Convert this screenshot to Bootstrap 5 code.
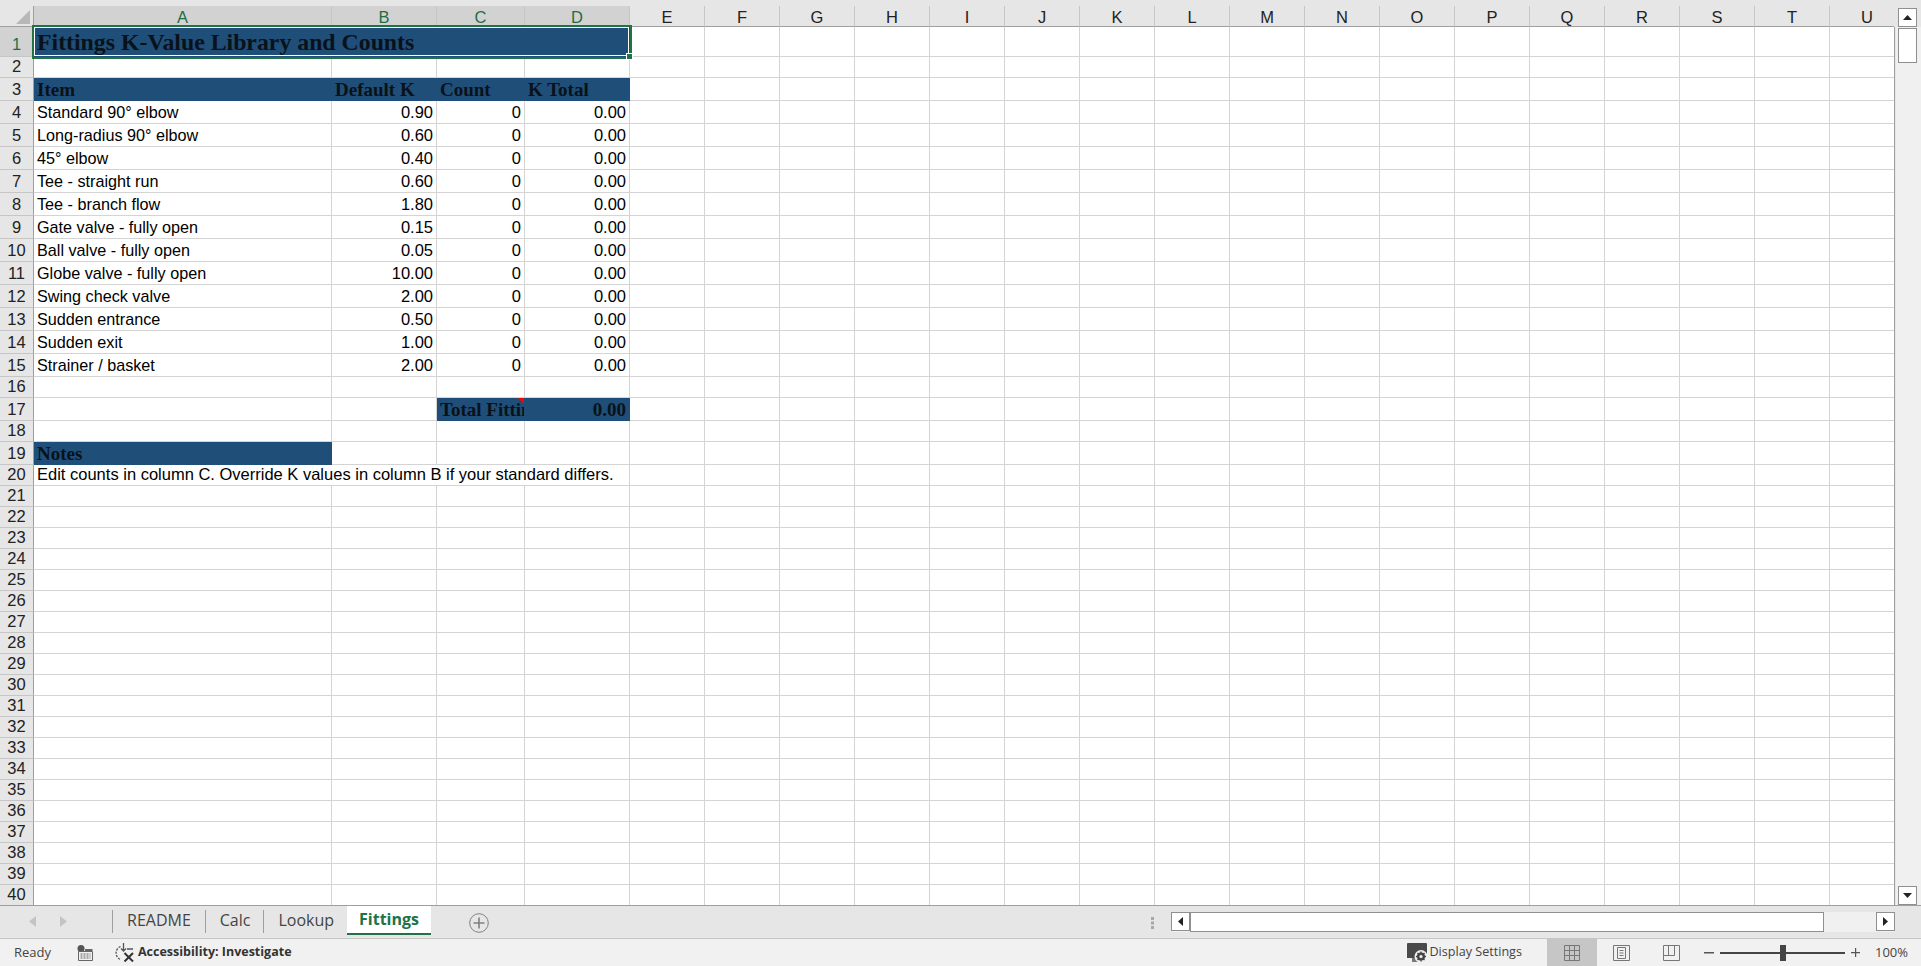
<!DOCTYPE html>
<html lang="en">
<head>
    <meta charset="UTF-8">
    <title>Fittings</title>
    <link href="https://cdn.jsdelivr.net/npm/bootstrap@5.3.2/dist/css/bootstrap.min.css" rel="stylesheet">
    <style>
        html, body { height: 100%; overflow: hidden; }
        body { background: #e6e6e6; font-family: "Liberation Sans", Arial, sans-serif; color: #000; }
        .xl-app { height: 966px; }
        .xl-sheetarea { height: 905px; padding-top: 6px; }
        .xl-gridclip { width: 1895px; height: 899px; overflow: hidden; background: #fff; }
        .xl-table { table-layout: fixed; width: 1905px; border-collapse: separate; border-spacing: 0; }
        .xl-table th, .xl-table td { padding: 0 3px; white-space: nowrap; overflow: hidden; border-right: 1px solid #d4d4d4; border-bottom: 1px solid #d4d4d4; font-size: 16.5px; line-height: 1; }
        .xl-table td { vertical-align: bottom; padding-bottom: 3px; }
        .xl-table td.xl-item { font-size: 16.2px; }
        .xl-table thead th { height: 21px; background: #e6e6e6; font-weight: 400; text-align: center; color: #222; border-right: 1px solid #c6c6c6; border-bottom: 1px solid #9f9f9f; padding: 2px 0 0; font-size: 16.5px; vertical-align: middle; }
        .xl-table thead th.xl-sel { background: #d2d2d2; color: #1f6e43; }
        .xl-table th.xl-rowhead { background: #e6e6e6; font-weight: 400; text-align: center; padding: 0 0 3px; border-right: 1px solid #9f9f9f; border-bottom: 1px solid #c6c6c6; vertical-align: bottom; color: #222; }
        .xl-table th.xl-rowhead.xl-sel { background: #d2d2d2; color: #1f6e43; padding-bottom: 4px; }
        .xl-table thead th.xl-corner { position: relative; border-right-color: #9f9f9f; }
        .xl-corner svg { position: absolute; right: 3px; bottom: 2px; }
        .xl-table td.xl-blue { background: #1f4e78; border-color: #1f4e78; font-family: "Liberation Serif", Cambria, serif; font-weight: 700; font-size: 19px; color: #0a1219; padding-bottom: 1px; }
        .xl-table td.xl-title { font-size: 23.8px; padding: 0 3px 1px; position: relative; overflow: visible; outline: 2px solid #217346; box-shadow: inset 0 0 0 1px #fff; }
        .xl-num { text-align: right; }
        .xl-note { position: relative; }
        .xl-note::after { content: ""; position: absolute; top: 0; right: 0; border-top: 6px solid #f00; border-left: 6px solid transparent; }
        .xl-handle { position: absolute; right: -4px; bottom: -4px; width: 7px; height: 7px; background: #217346; border: 1px solid #fff; }
        .xl-vscroll { width: 26px; padding: 2px 4px 0 3px; background: linear-gradient(#e6e6e6 21px, #f0f0f0 21px); box-shadow: inset 1px 0 0 #e6e6e6; }
        .xl-sheetedge { width: 1px; margin-top: 21px; background: #9f9f9f; }
        .xl-sbbtn { flex: none; width: 19px; height: 19px; background: #fff; border: 1px solid #8f8f8f; }
        .xl-thumb { width: 19px; height: 35px; background: #fff; border: 1px solid #8f8f8f; margin-top: 1px; }
        .xl-tabbar { height: 33px; border-top: 1px solid #9f9f9f; font-size: 16px; font-family: "Open Sans", sans-serif; padding-right: 26px; }
        .xl-tabnav { width: 112px; height: 31px; padding-left: 29px; gap: 24px; }
        .xl-tab { margin-top: 4px; padding: 0 14px 3px; height: 23px; color: #444; border-left: 1px solid #9f9f9f; }
        .xl-tab-narrow { padding: 0 13px 3px 14px; }
        .xl-tab-on { margin-top: 0; height: 29px; background: #fff; color: #217346; font-weight: 700; border: 0; border-bottom: 2px solid #217346; padding: 0 12px 1px; }
        .xl-tabadd { margin-left: 38px; margin-top: 7px; }
        .xl-dots { margin-top: 11px; margin-right: 17px; }
        .xl-hscroll { width: 724px; height: 20px; margin-top: 6px; background: #f0f0f0; }
        .xl-hthumb { width: 634px; height: 20px; background: #fff; border: 1px solid #8f8f8f; }
        .xl-status { height: 28px; background: #f1f1f1; border-top: 1px solid #c6c6c6; font-size: 13px; font-family: "Open Sans", sans-serif; color: #444; padding-left: 14px; }
        .xl-ready { width: 63px; }
        .xl-acc { margin-left: 22px; margin-right: 3px; }
        .xl-acctext { font-weight: 700; font-size: 12.5px; color: #333; }
        .xl-display { margin-left: 2px; font-size: 12.6px; }
        .xl-viewbtn { width: 50px; height: 27px; }
        .xl-viewbtn-on { background: #c6c6c6; margin-left: 25px; }
        .xl-zoom { margin-left: 7px; gap: 6px; }
        .xl-slider { width: 125px; height: 2px; background: #444; position: relative; }
        .xl-slider::after { content: ""; position: absolute; left: 60px; top: -7px; width: 6px; height: 16px; background: #444; }
        .xl-pct { margin-left: 15px; margin-right: 13px; }
    </style>
</head>
<body>
<div class="xl-app d-flex flex-column">
    <div class="xl-sheetarea d-flex">
        <div class="xl-gridclip">
            <table class="xl-table">
                <colgroup id="cols"></colgroup>
                <thead id="head"></thead>
                <tbody id="body"></tbody>
            </table>
        </div>
        <div class="xl-sheetedge"></div>
        <div class="xl-vscroll d-flex flex-column justify-content-between">
            <div>
                <div class="xl-sbbtn d-flex align-items-center justify-content-center"><svg width="9" height="5"><path d="M0 5L4.500 0 9 5z" fill="#222"/></svg></div>
                <div class="xl-thumb"></div>
            </div>
            <div class="xl-sbbtn d-flex align-items-center justify-content-center"><svg width="9" height="5"><path d="M0 0L4.500 5 9 0z" fill="#222"/></svg></div>
        </div>
    </div>
    <div class="xl-tabbar d-flex align-items-start">
        <div class="xl-tabnav d-flex align-items-center">
            <svg width="7" height="11"><path d="M7 0L0 5.500 7 11z" fill="#c4c4c4"/></svg>
            <svg width="7" height="11"><path d="M0 0L7 5.500 0 11z" fill="#c4c4c4"/></svg>
        </div>
        <div class="xl-tab d-flex align-items-center">README</div>
        <div class="xl-tab xl-tab-narrow d-flex align-items-center">Calc</div>
        <div class="xl-tab xl-tab-narrow d-flex align-items-center">Lookup</div>
        <div class="xl-tab xl-tab-on d-flex align-items-center">Fittings</div>
        <div class="xl-tabadd d-flex">
            <svg width="20" height="20" fill="none" stroke="#808080"><circle cx="10" cy="10" r="9.300"/><path d="M10 4.500v11M4.500 10h11" stroke-width="1.600"/></svg>
        </div>
        <div class="xl-dots ms-auto d-flex">
            <svg width="3" height="12"><path d="M0 0h3v3H0zM0 4.500h3v3H0zM0 9h3v3H0z" fill="#a8a8a8"/></svg>
        </div>
        <div class="xl-hscroll d-flex">
            <div class="xl-sbbtn d-flex align-items-center justify-content-center"><svg width="5" height="9"><path d="M5 0L0 4.500 5 9z" fill="#222"/></svg></div>
            <div class="xl-hthumb"></div>
            <div class="xl-sbbtn ms-auto d-flex align-items-center justify-content-center"><svg width="5" height="9"><path d="M0 0L5 4.500 0 9z" fill="#222"/></svg></div>
        </div>
    </div>
    <div class="xl-status d-flex align-items-center">
        <span class="xl-ready">Ready</span>
        <svg width="16" height="16" fill="none" stroke="#666"><circle cx="4" cy="3.500" r="3.500" fill="#555" stroke="none"/><path d="M1.500 6.500h14V15.500H1.500z"/><path d="M8 5h7.500" stroke-width="2"/><path d="M3.500 9h10M3.500 11h10M3.500 13h10" stroke-dasharray="2 1"/></svg>
        <svg class="xl-acc" width="20" height="19" fill="none" stroke="#555" stroke-width="1.300"><path d="M5.500 3.500A7 7 0 0 0 5.500 16.500" stroke-dasharray="2.200 1.200"/><path d="M8.500 0v8M6 5.500l2.500 2.500L11 5.500M12 6h6"/><path d="M9.500 10l8.500 8.500M18 10l-8.500 8.500" stroke="#333" stroke-width="2"/></svg>
        <span class="xl-acctext">Accessibility: Investigate</span>
        <svg class="ms-auto" width="20" height="20"><path d="M0 1q0-1 1-1h18q1 0 1 1v14H0z" fill="#4a4a4a"/><path d="M5 15h7v4H5z" fill="#777"/><circle cx="14" cy="13.500" r="6.500" fill="#f1f1f1"/><circle cx="14" cy="13.500" r="3" fill="none" stroke="#444" stroke-width="2"/><path d="M14 8.500v10M9 13.500h10M10.500 10l7 7M17.500 10l-7 7" stroke="#444" stroke-width="1.300"/><circle cx="14" cy="13.500" r="1.600" fill="#f1f1f1"/></svg>
        <span class="xl-display">Display Settings</span>
        <div class="xl-viewbtn xl-viewbtn-on d-flex align-items-center justify-content-center">
            <svg width="16" height="16" fill="none" stroke="#777"><path d="M.5.500h15v15H.5zM5.500.500v15M10.500.500v15M.5 5.500h15M.5 10.500h15"/></svg>
        </div>
        <div class="xl-viewbtn d-flex align-items-center justify-content-center">
            <svg width="17" height="16" fill="none" stroke="#777"><path d="M.5.500h16v15H.5z"/><path d="M4.500 2.500h8v11h-8zM6.500 5.500h4M6.500 8h4M6.500 10.500h4"/></svg>
        </div>
        <div class="xl-viewbtn d-flex align-items-center justify-content-center">
            <svg width="17" height="16" fill="none" stroke="#777"><path d="M.5.500h16v15H.5zM.5 10.500h11V.5M5.500.500v10"/></svg>
        </div>
        <div class="xl-zoom d-flex align-items-center">
            <svg width="10" height="2"><path d="M0 0h10v1.500H0z" fill="#555"/></svg>
            <div class="xl-slider"></div>
            <svg width="9" height="9"><path d="M4 0h1.200v9H4zM0 4h9v1.200H0z" fill="#555"/></svg>
        </div>
        <span class="xl-pct">100%</span>
    </div>
</div>
<script>
    const colWidths = [34, 298, 105, 88, 105];
    for (let i = 0; i < 17; i++) colWidths.push(75);
    const letters = 'ABCDEFGHIJKLMNOPQRSTU'.split('');
    const colsEl = document.getElementById('cols');
    colWidths.forEach(w => { const c = document.createElement('col'); c.width = w; colsEl.appendChild(c); });
    document.getElementById('head').innerHTML = '<tr><th class="xl-corner"><svg width="14" height="14"><path d="M14 0V14H0z" fill="#b8b8b8"/></svg></th>' + letters.map((l, i) => `<th class="${i < 4 ? 'xl-sel' : ''}">${l}</th>`).join('') + '</tr>';

    const items = [['Standard 90° elbow','0.90'],['Long-radius 90° elbow','0.60'],['45° elbow','0.40'],['Tee - straight run','0.60'],['Tee - branch flow','1.80'],['Gate valve - fully open','0.15'],['Ball valve - fully open','0.05'],['Globe valve - fully open','10.00'],['Swing check valve','2.00'],['Sudden entrance','0.50'],['Sudden exit','1.00'],['Strainer / basket','2.00']];
    const heights = {1: 30, 3: 23, 17: 23, 19: 23};
    for (let r = 4; r <= 15; r++) heights[r] = 23;
    const blanks = n => '<td></td>'.repeat(n);
    let html = '';
    for (let r = 1; r <= 40; r++) {
        let cells;
        if (r === 1) cells = '<td colspan="4" class="xl-blue xl-title">Fittings K-Value Library and Counts<span class="xl-handle"></span></td>' + blanks(17);
        else if (r === 3) cells = '<td class="xl-blue">Item</td><td class="xl-blue">Default K</td><td class="xl-blue">Count</td><td class="xl-blue">K Total</td>' + blanks(17);
        else if (r >= 4 && r <= 15) cells = `<td class="xl-item">${items[r-4][0]}</td><td class="xl-num">${items[r-4][1]}</td><td class="xl-num">0</td><td class="xl-num">0.00</td>` + blanks(17);
        else if (r === 17) cells = '<td></td><td></td><td class="xl-blue xl-note">Total Fittings K</td><td class="xl-blue xl-num">0.00</td>' + blanks(17);
        else if (r === 19) cells = '<td class="xl-blue">Notes</td>' + blanks(20);
        else if (r === 20) cells = '<td colspan="4">Edit counts in column C. Override K values in column B if your standard differs.</td>' + blanks(17);
        else cells = blanks(21);
        const h = heights[r] || 21;
        html += `<tr style="height:${h}px"><th class="xl-rowhead ${r === 1 ? 'xl-sel' : ''}">${r}</th>${cells}</tr>`;
    }
    document.getElementById('body').innerHTML = html;
</script>
<script src="https://cdn.jsdelivr.net/npm/bootstrap@5.3.2/dist/js/bootstrap.bundle.min.js"></script>
</body>
</html>
